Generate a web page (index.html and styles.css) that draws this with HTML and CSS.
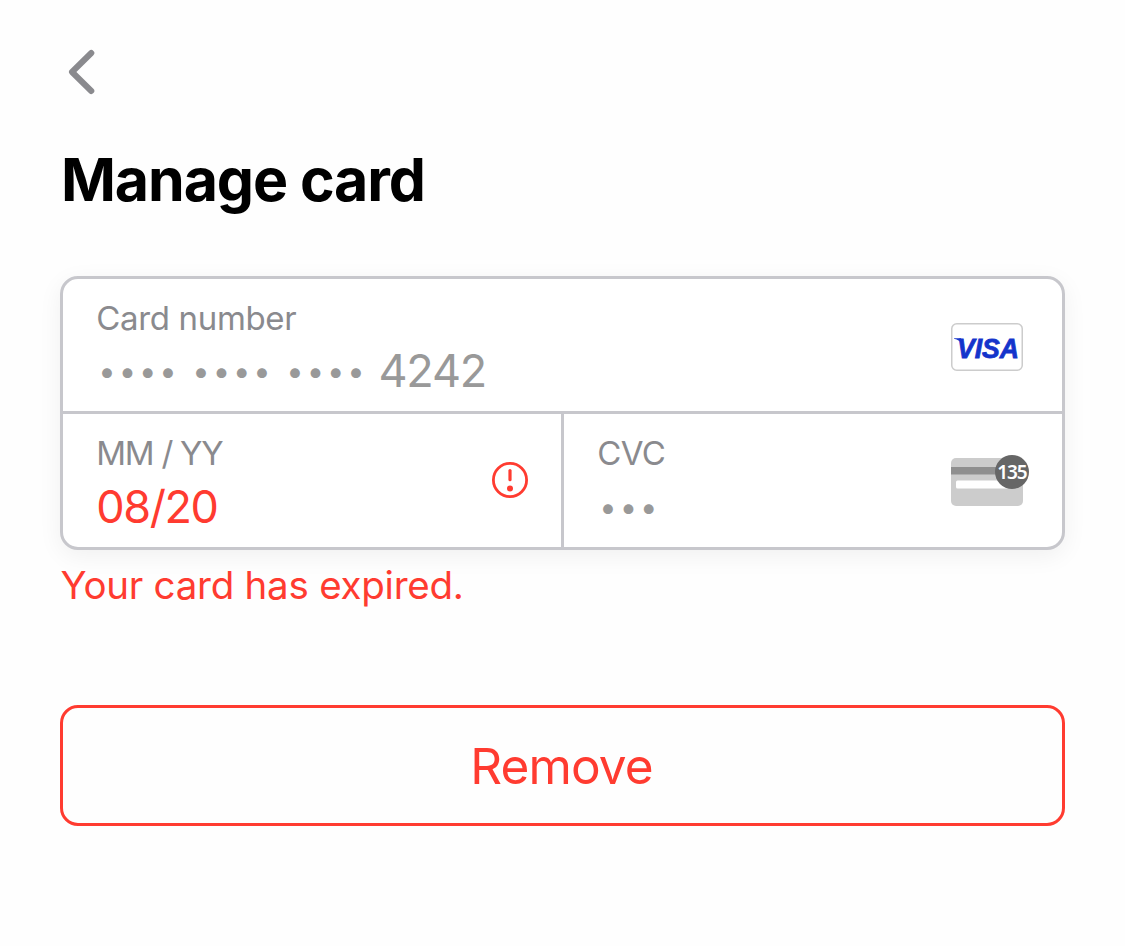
FILE: index.html
```html
<!DOCTYPE html>
<html lang="en">
<head>
<meta charset="utf-8">
<title>Manage card</title>
<link rel="stylesheet" href="styles.css">
</head>
<body>
<main class="screen">
  <button class="back" aria-label="Back">
    <svg width="28" height="46" viewBox="0 0 28 46" fill="none" stroke="#8a8a8e" stroke-width="6" stroke-linecap="round" stroke-linejoin="round"><path d="M23.3 4 4 23 23.3 42"/></svg>
  </button>
  <h1 class="title">Manage card</h1>
  <section class="card">
    <div class="field number">
      <div class="text">
        <div class="label">Card number</div>
        <div class="value muted"><span class="dots">••••</span><span class="dots">••••</span><span class="dots">••••</span><span class="last4">4242</span></div>
      </div>
      <svg class="brand" width="72" height="48" viewBox="0 0 72 48">
        <rect x=".75" y=".75" width="70.5" height="46.5" rx="5" fill="#fff" stroke="#ccc" stroke-width="1.5"/>
        <path d="M3 15.2H10L13 23C10.5 18.8 6.5 16.4 3 15.8Z" fill="#1434cb"/>
        <text class="visa" x="6" y="34.5" textLength="62" lengthAdjust="spacingAndGlyphs">VISA</text>
      </svg>
    </div>
    <div class="row">
      <div class="field expiry">
        <div class="text">
          <div class="label date">MM / YY</div>
          <div class="value error">08/20</div>
        </div>
        <svg class="alert" width="36" height="36" viewBox="0 0 36 36"><circle cx="18" cy="18" r="16.6" fill="none" stroke="#ff3b30" stroke-width="2.8"/><path d="M18 8.5v9.2" stroke="#ff3b30" stroke-width="3.2" stroke-linecap="round"/><circle cx="18" cy="26.4" r="3" fill="#ff3b30"/></svg>
      </div>
      <div class="field cvc">
        <div class="text">
          <div class="label code">CVC</div>
          <div class="value muted"><span class="dots">•••</span></div>
        </div>
        <svg class="cvc-icon" width="78" height="52" viewBox="0 0 78 52">
          <rect y="4" width="72" height="48" rx="5" fill="#ccc"/>
          <path d="M0 13h72v7.5H0z" fill="#8f8f8f"/>
          <rect x="5" y="26.5" width="62" height="8" rx="1.5" fill="#fff"/>
          <circle cx="61" cy="18" r="17" fill="#666"/>
          <text class="digits" x="46.3" y="25.3">135</text>
        </svg>
      </div>
    </div>
  </section>
  <p class="message">Your card has expired.</p>
  <button class="remove">Remove</button>
</main>
</body>
</html>
```
FILE: styles.css
```css
* { box-sizing: border-box; }
body { margin: 0; background: #fefefe; font-family: Inter, sans-serif; }
svg { display: block; flex: none; overflow: visible; }
.screen { padding: 49px 60px 0; height: 946px; }
.back { display: block; margin: 0 0 0 8px; padding: 0; border: 0; background: none; }
.title { margin: 55px 0 0 1px; font-size: 59px; line-height: 60px; font-weight: 700; letter-spacing: -1.1px; color: #000; }
.card { margin-top: 66px; height: 274px; border: 3px solid #c7c7cc; border-radius: 18px; background: #fff; box-shadow: 0 6px 24px rgba(0, 0, 0, .06); display: flex; flex-direction: column; }
.field { display: flex; align-items: center; justify-content: space-between; padding-left: 33.3px; }
.number { height: 135px; padding-top: 4px; padding-right: 39px; border-bottom: 3px solid #c7c7cc; }
.row { display: flex; height: 133px; }
.expiry { width: 501px; padding-right: 33px; border-right: 3px solid #c7c7cc; }
.cvc { flex: 1; padding-right: 33px; }
.cvc-icon, .alert { margin-top: -2px; }
.text { display: flex; flex-direction: column; gap: 4px; }
.row .text { gap: 5px; padding-top: 3px; }
.label { font-size: 33px; line-height: 44px; letter-spacing: -.34px; color: #8a8a8e; white-space: nowrap; }
.date { letter-spacing: -1.25px; }
.code { letter-spacing: -.7px; }
.value { display: flex; align-items: center; font-size: 45px; line-height: 54px; height: 54px; white-space: nowrap; letter-spacing: -1.2px; }
.muted { color: #999; }
.error { color: #ff3b30; letter-spacing: -1.4px; }
.dots { width: 94px; padding: 1px 0 0 2px; font-size: 31px; letter-spacing: 2.9px; }
.number .dots { padding: 0 0 1px 2px; }
.last4 { margin-left: .2px; }
.message { margin: 11px 0 0 .5px; font-size: 38.5px; line-height: 48px; letter-spacing: -.25px; color: #ff3b30; }
.remove { display: block; width: 100%; height: 121px; margin-top: 96px; padding: 0 2px 0 0; border: 3px solid #ff3b30; border-radius: 18px; background: transparent; font: 49.5px/60px Inter, sans-serif; letter-spacing: -.9px; color: #ff3b30; }
.visa { font: italic 700 27px "Liberation Sans", sans-serif; fill: #1434cb; stroke: #1434cb; stroke-width: .8px; }
.digits { font: 600 19px "Noto Sans", sans-serif; letter-spacing: -1.1px; fill: #fff; }
```
